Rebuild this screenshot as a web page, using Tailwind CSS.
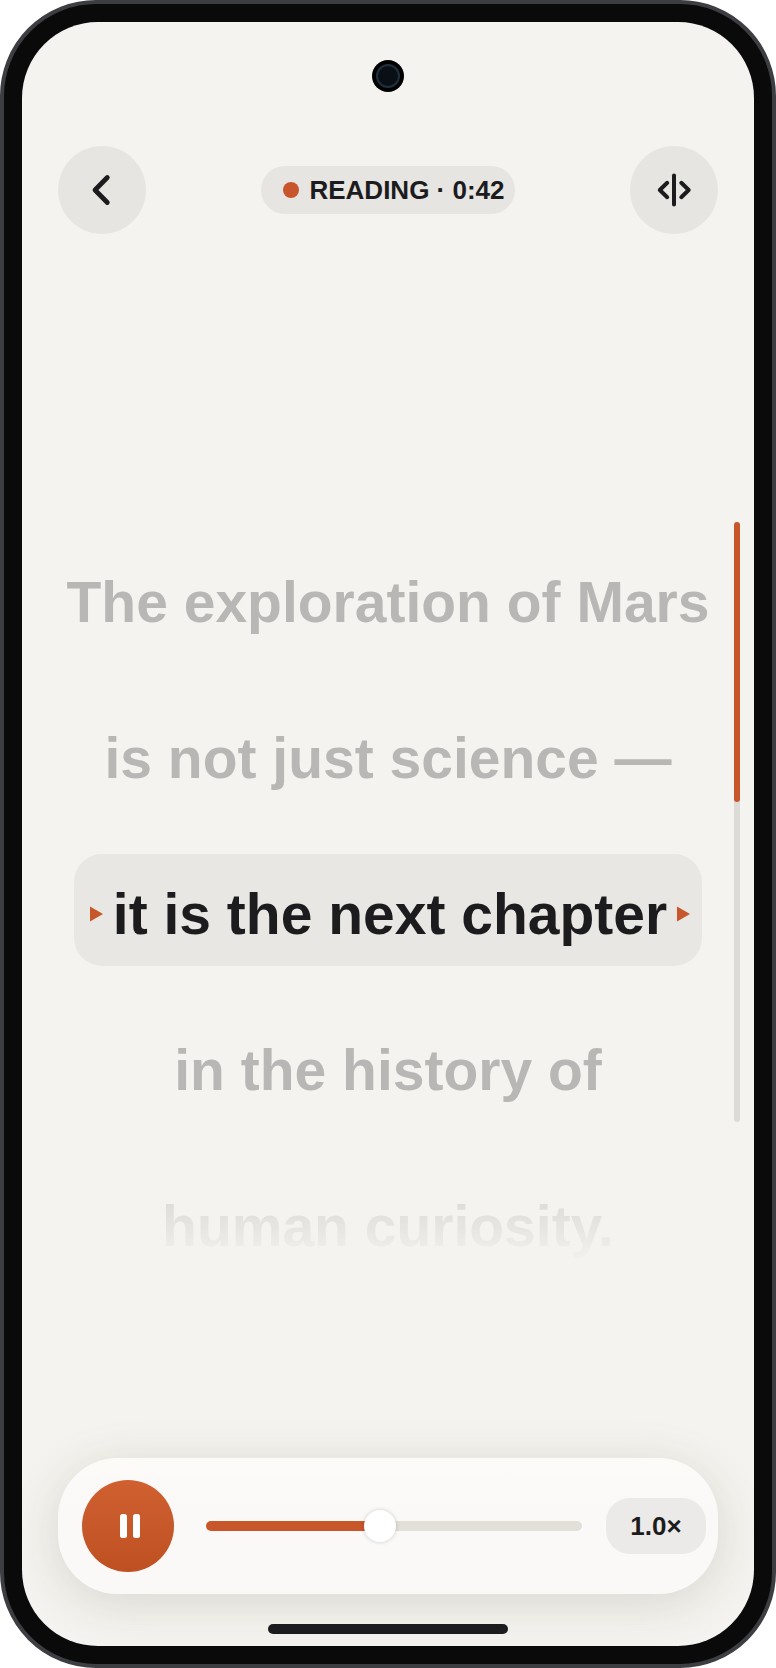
<!DOCTYPE html>
<html lang="en">
<head>
    <meta charset="UTF-8">
    <meta name="viewport" content="width=device-width, initial-scale=1.0">
    <title>Teleprompter</title>
    <script src="https://cdn.jsdelivr.net/npm/@tailwindcss/browser@4"></script>
</head>
<body class="bg-white font-['Liberation_Sans',Arial,sans-serif] font-bold text-[#1c1c1e]">
    <!-- Phone frame -->
    <div class="flex min-h-screen w-full flex-col rounded-[96px] border-4 border-[#3d3e41] bg-[#0a0a0a] p-[18px]">
        <div class="flex flex-1 flex-col overflow-hidden rounded-[76px] bg-[#f4f3ef]">

            <!-- Camera -->
            <div class="flex justify-center pt-[38px]">
                <div class="size-8 rounded-full bg-black p-1">
                    <div class="size-6 rounded-full border-2 border-[#1f303d] bg-[#0a0f16]"></div>
                </div>
            </div>

            <!-- Header -->
            <header class="mt-[54px] flex items-center justify-between px-9">
                <button type="button" aria-label="Back" class="flex size-[88px] items-center justify-center rounded-full bg-[#e6e5e1]">
                    <svg class="size-10" viewBox="0 0 40 40" fill="none" stroke="currentColor" stroke-width="4.8" stroke-linecap="round" stroke-linejoin="round">
                        <path d="M25.3 7.5 13 20l12.3 12.5"/>
                    </svg>
                </button>
                <div class="flex h-12 items-center gap-2.5 rounded-full bg-[#e6e5e1] pr-2.5 pl-[22px] text-[26px] leading-8 whitespace-nowrap">
                    <span class="size-4 rounded-full bg-[#c7562a]"></span>
                    <span>READING · 0:42</span>
                </div>
                <button type="button" aria-label="Mirror text" class="flex size-[88px] items-center justify-center rounded-full bg-[#e6e5e1]">
                    <svg class="size-10" viewBox="0 0 40 40" fill="none" stroke="currentColor" stroke-width="4" stroke-linecap="round" stroke-linejoin="round">
                        <path d="M20 5.5v29"/>
                        <path d="M13.2 12.8 5.8 20l7.4 7.2"/>
                        <path d="M27.3 12.8 34.7 20l-7.4 7.2"/>
                    </svg>
                </button>
            </header>

            <!-- Script -->
            <main class="grid flex-1 grid-cols-1 content-start pt-[288px]">
                <div class="col-start-1 row-start-1 mt-5 flex flex-col gap-11 px-[52px] text-center text-[57px] leading-[72px] whitespace-nowrap text-[#b8b7b5] [mask-image:linear-gradient(to_bottom,black_76%,transparent_98%)]">
                    <p class="flex h-28 items-center justify-center pt-2">The exploration of Mars</p>
                    <p class="flex h-28 items-center justify-center pt-2">is not just science —</p>
                    <div class="flex h-28 items-center justify-center gap-2.5 rounded-[28px] bg-[#e8e7e3] pt-2 pl-1 text-[#1c1c1e]">
                        <svg class="h-4 w-[13px] shrink-0 fill-[#c7562a]" viewBox="0 0 13 16"><path d="M0 .5 13 8 0 15.5z"/></svg>
                        <p>it is the next chapter</p>
                        <svg class="h-4 w-[13px] shrink-0 fill-[#c7562a]" viewBox="0 0 13 16"><path d="M0 .5 13 8 0 15.5z"/></svg>
                    </div>
                    <p class="flex h-28 items-center justify-center pt-2">in the history of</p>
                    <p class="flex h-28 items-center justify-center pt-2">human curiosity.</p>
                </div>
                <!-- Scroll position -->
                <div class="col-start-1 row-start-1 mr-3.5 h-[600px] w-1.5 justify-self-end rounded-full bg-[#dcdbd7]">
                    <div class="h-[280px] rounded-full bg-[#c7562a]"></div>
                </div>
            </main>

            <!-- Player -->
            <footer class="px-9 pb-3">
                <div class="flex h-[136px] items-center rounded-[60px] bg-linear-to-b from-[#fcfbf8] to-[#faf9f8] to-40% pr-3 pl-6 shadow-[0_8px_48px_rgba(60,55,30,0.15)]">
                    <button type="button" aria-label="Pause" class="flex size-[92px] shrink-0 items-center justify-center rounded-full bg-linear-to-b from-[#d06030] to-[#be5022] text-white">
                        <svg class="size-8" viewBox="0 0 32 32" fill="currentColor">
                            <rect x="8" y="4" width="7" height="24" rx="2.5"/>
                            <rect x="21" y="4" width="7" height="24" rx="2.5"/>
                        </svg>
                    </button>
                    <input type="range" min="0" max="100" value="46" aria-label="Position" class="ml-8 h-8 min-w-0 flex-1 appearance-none bg-transparent [&::-webkit-slider-runnable-track]:h-2.5 [&::-webkit-slider-runnable-track]:rounded-full [&::-webkit-slider-runnable-track]:bg-[linear-gradient(to_right,#c7562a_46%,#e3e0d9_46%)] [&::-webkit-slider-thumb]:mt-[-11px] [&::-webkit-slider-thumb]:size-8 [&::-webkit-slider-thumb]:appearance-none [&::-webkit-slider-thumb]:rounded-full [&::-webkit-slider-thumb]:bg-white [&::-webkit-slider-thumb]:shadow-[0_0_4px_rgba(0,0,0,0.18)]">
                    <button type="button" aria-label="Speed 1.0×" class="ml-6 h-14 w-[100px] shrink-0 rounded-3xl bg-[#ebeae8] text-[26px] leading-8">1.0×</button>
                </div>
                <!-- Home indicator -->
                <div class="mx-auto mt-[30px] h-2.5 w-60 rounded-full bg-[#1c1c1e]"></div>
            </footer>
        </div>
    </div>
</body>
</html>
